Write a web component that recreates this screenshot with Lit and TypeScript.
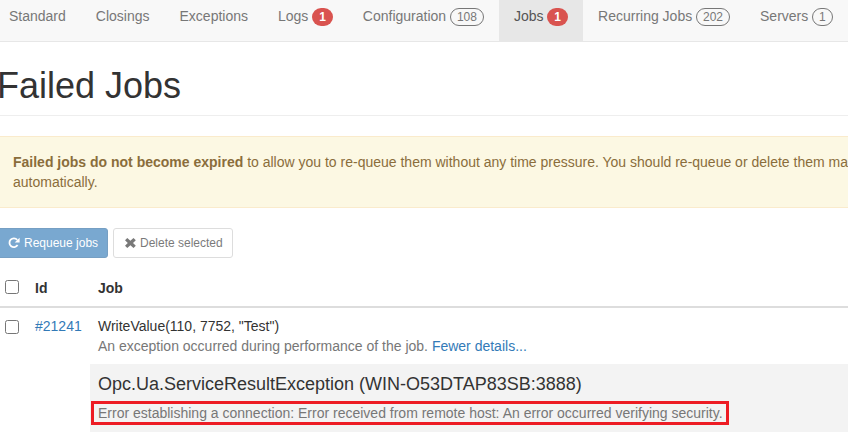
import { LitElement, html, css } from "lit";
import { customElement } from "lit/decorators.js";

const navItems: { label: string; badge?: string; kind?: string; active?: boolean }[] = [
  { label: "Standard" },
  { label: "Closings" },
  { label: "Exceptions" },
  { label: "Logs", badge: "1", kind: "red" },
  { label: "Configuration", badge: "108", kind: "line" },
  { label: "Jobs", badge: "1", kind: "red", active: true },
  { label: "Recurring Jobs", badge: "202", kind: "line" },
  { label: "Servers", badge: "1", kind: "line" },
];

@customElement("app-root")
export class AppRoot extends LitElement {
  static styles = css`
    :host { display: block; width: 848px; height: 432px; overflow: hidden; background: #fff;
      font-family: "Liberation Sans", Arial, sans-serif; font-size: 14px; line-height: 20px; color: #333; }
    .nav-wrap { background: #f8f8f8; border-bottom: 1px solid #e7e7e7; overflow: hidden; }
    .nav { display: flex; height: 41px; margin-left: -6px; width: 1000px; }
    .item { display: flex; align-items: center; padding: 0 15px 9px; color: #777; white-space: nowrap; gap: 3.8px; }
    .item.active { background: #e7e7e7; color: #555; }
    .badge { display: inline-block; box-sizing: border-box; min-width: 10px; height: 18px; margin-top: 2px; padding: 3px 7px; border-radius: 10px; font-size: 12px; line-height: 12px; font-weight: 700; text-align: center; }
    .badge.red { background: #d9534f; color: #fff; }
    .badge.line { background: transparent; border: 1px solid #777; color: #777; font-weight: 400; padding: 2px 6px; }
    .page { margin-left: -3px; width: 1400px; }
    h1 { margin: 0; font-size: 36px; font-weight: 500; line-height: 40px; padding-top: 24px; padding-bottom: 9px; border-bottom: 1px solid #eee; }
    .alert { margin-top: 20px; box-sizing: border-box; height: 72px; padding: 15px; background: #fcf8e3; border: 1px solid #faebcc; color: #8a6d3b; }
    .alert b { font-weight: 700; }
    .alert p { margin: 0; white-space: nowrap; }
    .btns { display: flex; gap: 5px; margin-top: 20px; }
    .btn { display: flex; align-items: center; gap: 4px; height: 30px; box-sizing: border-box; padding: 0 0 0 10px; border-radius: 3px; font-size: 12px; border: 1px solid #ccc; background: #fff; color: #333; opacity: .65; width: 120px; }
    .btn.primary { background: #337ab7; border-color: #2e6da4; color: #fff; width: 111px; }
    .btn svg { width: 12px; height: 12px; display: block; flex: none; }
    .thead, .row { display: grid; grid-template-columns: 38px 63px 1fr; }
    .thead { margin-top: 10px; height: 38px; border-bottom: 2px solid #ddd; font-weight: 700; align-items: center; }
    .thead .th { padding-top: 2px; }
    .check { width: 12px; height: 12px; border: 1px solid #767676; border-radius: 2.5px; background: #fff; margin-left: 8px; }
    .row { padding-top: 8px; }
    .row .check { margin-top: 4px; }
    a { color: #337ab7; text-decoration: none; }
    .muted { color: #777; }
    .details { margin-left: 93px; margin-top: 8px; background: #f3f3f3; padding-top: 10px; height: 70px; box-sizing: border-box; }
    .details h4 { margin: 0 0 0 8px; font-size: 18px; line-height: 20px; font-weight: 500; color: #333; }
    .msg { width: fit-content; margin: 7px 0 0 1px; padding: 0 3px 0 4px; height: 18px; line-height: 18px; border: 3px solid #ed1c24; color: #777; white-space: nowrap; }
  `;

  render() {
    return html`
      <div class="nav-wrap"><div class="nav">
        ${navItems.map(
          (n) => html`<div class="item ${n.active ? "active" : ""}">
            <span>${n.label}</span>
            ${n.badge ? html`<span class="badge ${n.kind}">${n.badge}</span>` : ""}
          </div>`
        )}
      </div></div>
      <div class="page">
        <h1>Failed Jobs</h1>
        <div class="alert"><p><b>Failed jobs do not become expired</b> to allow you to re-queue them without any time pressure. You should re-queue or delete them manually, or apply AutomaticRetry(OnAttemptsExceeded = AttemptsExceededAction.Delete) attribute to delete them<br>automatically.</p></div>
        <div class="btns">
          <div class="btn primary">
            <svg viewBox="0 0 12 12"><path d="M9.6 8.1A4.4 4.4 0 1 1 9.2 2.9" fill="none" stroke="currentColor" stroke-width="1.8"/><path d="M11.6 0.7V5.6H6.7z" fill="currentColor"/></svg>
            Requeue jobs
          </div>
          <div class="btn">
            <svg viewBox="0 0 12 12"><path d="M1 3.2L3.3 0.9 6.4 3.7 9.5 0.9 11.8 3.2 9 6 11.8 8.8 9.5 11.1 6.4 8.3 3.3 11.1 1 8.8 3.8 6z" fill="currentColor"/></svg>
            Delete selected
          </div>
        </div>
        <div class="thead">
          <div class="check"></div>
          <div class="th">Id</div>
          <div class="th">Job</div>
        </div>
        <div class="row">
          <div class="check"></div>
          <div><a>#21241</a></div>
          <div>
            <div>WriteValue(110, 7752, "Test")</div>
            <div class="muted">An exception occurred during performance of the job. <a>Fewer details...</a></div>
          </div>
        </div>
        <div class="details">
          <h4>Opc.Ua.ServiceResultException (WIN-O53DTAP83SB:3888)</h4>
          <div class="msg">Error establishing a connection: Error received from remote host: An error occurred verifying security.</div>
        </div>
      </div>
    `;
  }
}
